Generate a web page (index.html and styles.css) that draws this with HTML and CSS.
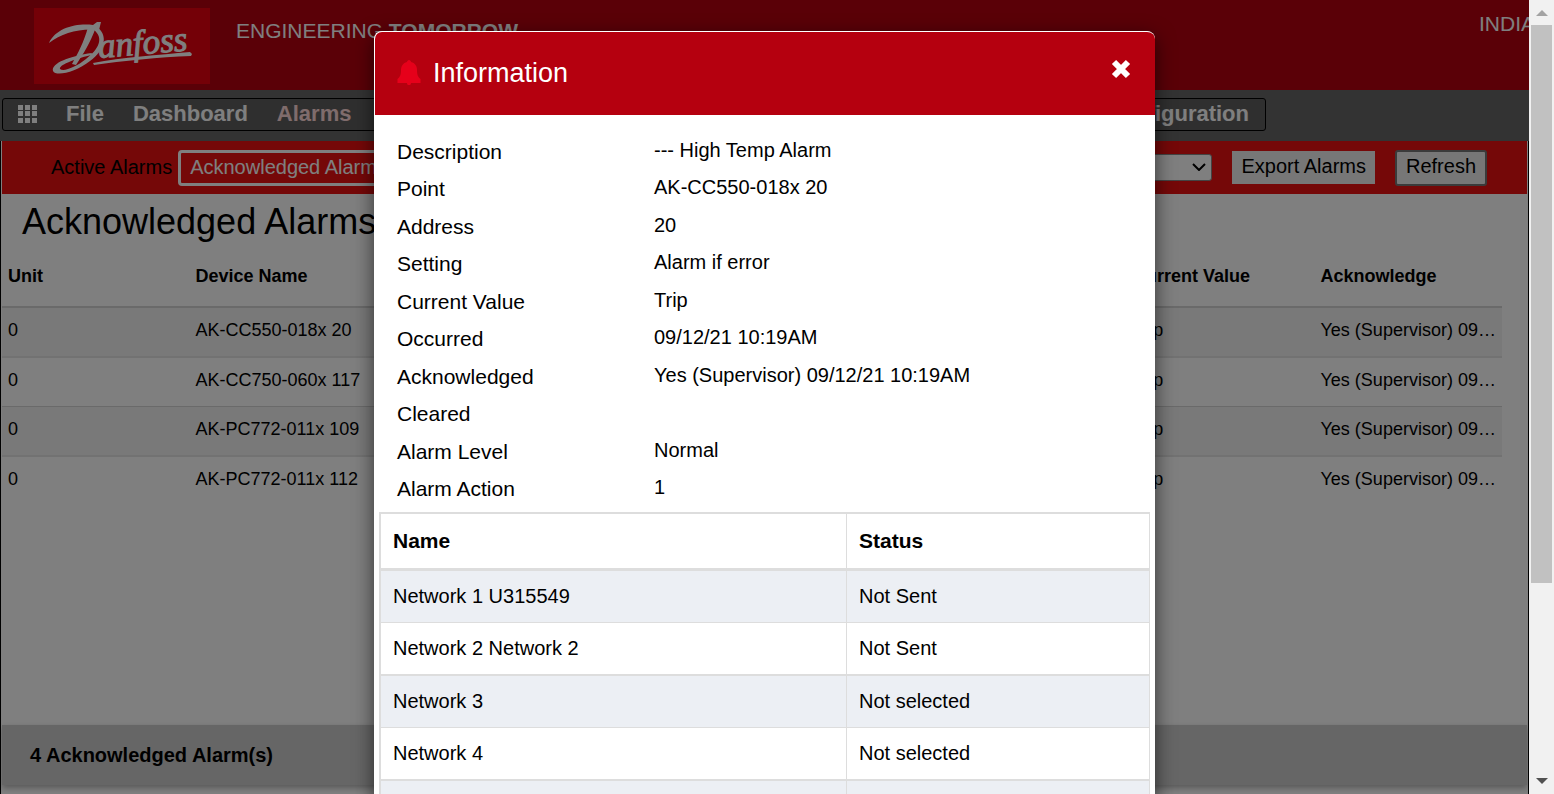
FILE: index.html
```html
<!DOCTYPE html>
<html lang="en">
<head>
<meta charset="utf-8">
<title>Acknowledged Alarms</title>
<link rel="stylesheet" href="styles.css">
</head>
<body>
<div class="window">
  <div class="screen">
    <div class="page">
      <header class="masthead">
        <svg class="logo" viewBox="0 0 176 76" role="img" aria-label="Danfoss">
          <rect width="176" height="76" fill="#e8000f"/>
          <g fill="#fff">
            <path d="M15 35C22 20 42 15 59 17L63 14L67 14L65 22C46 20 28 25 15 35Z"/>
            <path d="M62 19C56 36 49 46 42 57L38 56C44 45 50 34 54 19Z"/>
            <path d="M59 55C88 49 125 47 156 44L158 46L157 48C125 49 88 53 60 57Z"/>
            <path d="M62 18C75 27 71 42 56 53C42 64 22 69 19 63C17 55 36 48 58 45L57 47C38 52 25 57 26 61C30 64 42 59 52 51C65 41 70 30 60 22Z"/>
          </g>
          <text class="logo-text" x="65" y="50" transform="rotate(-5 65 50)">anfoss</text>
        </svg>
        <p class="slogan">ENGINEERING <strong>TOMORROW</strong></p>
        <p class="site">INDIA</p>
      </header>

      <nav class="menu-strip">
        <div class="menu">
          <a class="menu-grid" href="#" aria-label="Overview">
            <svg width="19" height="18" viewBox="0 0 19 18" fill="#fff">
              <path d="M0 0h5v5h-5zM7 0h5v5h-5zM14 0h5v5h-5zM0 6h5v5h-5zM7 6h5v5h-5zM14 6h5v5h-5zM0 13h5v5h-5zM7 13h5v5h-5zM14 13h5v5h-5z"/>
            </svg>
          </a>
          <a href="#">File</a>
          <a href="#">Dashboard</a>
          <a class="current" href="#">Alarms</a>
          <a class="menu-last" href="#">Configuration</a>
        </div>
      </nav>

      <main class="content">
        <div class="toolbar">
          <a class="tab" href="#">Active Alarms</a>
          <a class="tab tab-selected" href="#">Acknowledged Alarms</a>
          <div class="tools">
            <span class="picker">
              <select aria-label="Alarm filter"><option></option></select>
              <svg width="14" height="8" viewBox="0 0 14 8" fill="none" stroke="#000" stroke-width="2"><path d="M1 1L7 7L13 1"/></svg>
            </span>
            <button class="export" type="button">Export Alarms</button>
            <button class="refresh" type="button">Refresh</button>
          </div>
        </div>
        <h1 class="title">Acknowledged Alarms</h1>
        <table class="alarms">
          <thead>
            <tr><th>Unit</th><th>Device Name</th><th></th><th></th><th></th><th></th><th>Current Value</th><th>Acknowledge</th></tr>
          </thead>
          <tbody>
            <tr><td>0</td><td>AK-CC550-018x 20</td><td></td><td></td><td></td><td></td><td>Trip</td><td>Yes (Supervisor) 09/12/21 10:19AM</td></tr>
            <tr><td>0</td><td>AK-CC750-060x 117</td><td></td><td></td><td></td><td></td><td>Trip</td><td>Yes (Supervisor) 09/12/21 10:19AM</td></tr>
            <tr><td>0</td><td>AK-PC772-011x 109</td><td></td><td></td><td></td><td></td><td>Trip</td><td>Yes (Supervisor) 09/12/21 10:19AM</td></tr>
            <tr><td>0</td><td>AK-PC772-011x 112</td><td></td><td></td><td></td><td></td><td>Trip</td><td>Yes (Supervisor) 09/12/21 10:19AM</td></tr>
          </tbody>
        </table>
        <footer class="summary">4 Acknowledged Alarm(s)</footer>
      </main>
    </div>

    <div class="backdrop">
      <section class="modal" role="dialog" aria-modal="true" aria-labelledby="modal-title">
        <header class="modal-head">
          <svg class="bell" width="24" height="25" viewBox="0 0 24 25" fill="#e6001a">
            <path d="M12 0C13 0 14 1 14 2C18 3 20 6 20 10C20 15 21 17 23.500 19V23H14C14 26 10 26 10 23H0.500V19C3 17 4 15 4 10C4 6 6 3 10 2C10 1 11 0 12 0Z"/>
          </svg>
          <h2 id="modal-title">Information</h2>
          <button class="close" type="button" aria-label="Close">
            <svg width="20" height="20" viewBox="0 0 20 20" fill="none" stroke="#fff" stroke-width="6"><path d="M3 3L17 17M17 3L3 17"/></svg>
          </button>
        </header>
        <dl class="details">
          <dt>Description</dt><dd>--- High Temp Alarm</dd>
          <dt>Point</dt><dd>AK-CC550-018x 20</dd>
          <dt>Address</dt><dd>20</dd>
          <dt>Setting</dt><dd>Alarm if error</dd>
          <dt>Current Value</dt><dd>Trip</dd>
          <dt>Occurred</dt><dd>09/12/21 10:19AM</dd>
          <dt>Acknowledged</dt><dd>Yes (Supervisor) 09/12/21 10:19AM</dd>
          <dt>Cleared</dt><dd></dd>
          <dt>Alarm Level</dt><dd>Normal</dd>
          <dt>Alarm Action</dt><dd>1</dd>
        </dl>
        <table class="routes">
          <thead><tr><th>Name</th><th>Status</th></tr></thead>
          <tbody>
            <tr><td>Network 1 U315549</td><td>Not Sent</td></tr>
            <tr><td>Network 2 Network 2</td><td>Not Sent</td></tr>
            <tr><td>Network 3</td><td>Not selected</td></tr>
            <tr><td>Network 4</td><td>Not selected</td></tr>
            <tr><td></td><td></td></tr>
          </tbody>
        </table>
      </section>
    </div>
  </div>

  <div class="scrollbar" aria-hidden="true">
    <svg width="12" height="6" viewBox="0 0 12 6" fill="#a3a3a3"><path d="M0 6L6 0L12 6Z"/></svg>
    <div class="track"><div class="thumb"></div></div>
    <svg width="12" height="6" viewBox="0 0 12 6" fill="#505050"><path d="M0 0L6 6L12 0Z"/></svg>
  </div>
</div>
</body>
</html>
```

FILE: styles.css
```css
* {
  box-sizing: border-box;
}

body {
  margin: 0;
  font-family: "Liberation Sans", Arial, sans-serif;
  color: #000;
}

a {
  color: inherit;
  text-decoration: none;
}

button,
select {
  font: inherit;
  color: inherit;
}

.window {
  display: flex;
  height: 100vh;
  overflow: hidden;
}

.screen {
  position: relative;
  flex: 1;
  min-width: 0;
  overflow: hidden;
}

.page {
  display: flex;
  flex-direction: column;
  height: 100%;
  background: #fff;
}

/* Brand bar */
.masthead {
  display: flex;
  align-items: flex-start;
  flex: none;
  height: 90px;
  padding-left: 34px;
  background: #b5000f;
  color: #fff;
  font-size: 21px;
  line-height: 24px;
  white-space: nowrap;
}

.logo {
  flex: none;
  width: 176px;
  margin-top: 8px;
}

.logo-text {
  font-family: "Liberation Serif", serif;
  font-size: 35px;
  font-style: italic;
  fill: #fff;
  stroke: #fff;
  stroke-width: 1px;
}

.slogan {
  margin: 19px 0 0 26px;
}

.site {
  width: 50px;
  margin: 12px 0 0 auto;
}

/* Menu */
.menu-strip {
  flex: none;
  padding: 8px 263px 10px 2px;
  background: #666;
}

.menu {
  display: flex;
  align-items: center;
  gap: 29px;
  height: 33px;
  padding: 0 16px 2px 15px;
  border: 1px solid #000;
  border-radius: 3px;
  background: #5f5f5f;
  color: #fff;
  font-size: 22px;
  font-weight: bold;
}

.menu-grid {
  display: flex;
}

.current {
  color: #ffd8d8;
}

.menu-last {
  margin-left: auto;
}

/* Alarm list */
.content {
  display: flex;
  flex-direction: column;
  flex: 1;
  padding: 0 1px 9px;
  border: solid #000;
  border-width: 0 1px;
}

.toolbar {
  display: flex;
  align-items: center;
  height: 53px;
  padding: 0 40px 0 49px;
  background: #ea1010;
  font-size: 20px;
  white-space: nowrap;
}

.tab-selected {
  margin-left: 6px;
  padding: 3px 9px 4px;
  border: 3px solid #fff;
  border-radius: 4px;
  color: #fff;
}

.tools {
  display: flex;
  align-items: center;
  gap: 20px;
  margin-left: auto;
}

.picker {
  position: relative;
  display: flex;
}

.picker select {
  appearance: none;
  width: 200px;
  height: 27px;
  border: 1px solid #888;
  border-radius: 3px;
  background: #fff;
}

.picker svg {
  position: absolute;
  top: 9px;
  right: 6px;
}

.export,
.refresh {
  height: 33px;
  padding: 0 9px 2px;
  border: 0;
  background: #efefef;
}

.refresh {
  height: 36px;
  border: 2px solid #767676;
  border-radius: 3px;
}

.title {
  margin: 0;
  padding: 7px 20px 0;
  font-size: 36px;
  font-weight: normal;
  line-height: 42px;
}

.alarms {
  width: calc(100% - 25px);
  table-layout: fixed;
  border-spacing: 0;
  font-size: 18px;
  line-height: 22px;
  text-align: left;
}

.alarms th,
.alarms td {
  overflow: hidden;
  padding: 11px 6px 15px;
  text-overflow: ellipsis;
  white-space: nowrap;
}

.alarms th {
  padding: 22px 6px 19px;
  border-bottom: 2px solid #d4d4d4;
}

.alarms td {
  border-bottom: 1px solid #d4d4d4;
}

.alarms tbody tr:nth-child(odd) td {
  border-bottom: 2px solid #e4e4e4;
}

.alarms tbody tr:last-child td {
  border-bottom: 0;
}

.alarms tbody tr:nth-child(odd) {
  background: #f2f2f2;
}

.summary {
  margin-top: auto;
  padding: 18px 28px;
  background: #ccc;
  box-shadow: 0 3px 6px rgba(0, 0, 0, 0.3);
  font-size: 20px;
  font-weight: bold;
  line-height: 24px;
}

/* Information dialog */
.backdrop {
  position: absolute;
  inset: 0;
  padding-top: 31px;
  background: rgba(0, 0, 0, 0.5);
}

.modal {
  width: 781px;
  max-width: 100%;
  margin: 0 auto;
  overflow: hidden;
  border: 1px solid #fff;
  border-right: 0;
  border-radius: 8px;
  background: #fff;
  box-shadow: 0 6px 20px rgba(0, 0, 0, 0.6);
}

.modal-head {
  display: flex;
  align-items: center;
  gap: 12px;
  height: 83px;
  padding: 0 24px 2px 22px;
  background: #b5000f;
  color: #fff;
}

.modal-head h2 {
  margin: 0;
  font-size: 27px;
  font-weight: normal;
  line-height: 32px;
}

.close {
  display: flex;
  margin-left: auto;
  padding: 0 0 8px;
  border: 0;
  background: none;
}

.details {
  display: grid;
  grid-template-columns: 257px 1fr;
  grid-template-rows: repeat(10, 1fr);
  align-items: center;
  min-height: 375px;
  margin: 18px 22px 4px;
  font-size: 20px;
  line-height: 24px;
}

.details dt {
  font-size: 21px;
}

.details dd {
  margin: 0;
  padding-bottom: 4px;
}

.routes {
  width: calc(100% - 9px);
  margin: 0 5px 0 4px;
  border: 2px solid #ddd;
  border-width: 2px 1px 0 2px;
  border-spacing: 0;
  font-size: 20px;
  line-height: 24px;
  text-align: left;
}

.routes th,
.routes td {
  height: 52px;
  padding: 0 12px 2px;
  border-bottom: 1px solid #ddd;
}

.routes th:first-child,
.routes td:first-child {
  width: 466px;
  border-right: 1px solid #ddd;
}

.routes th {
  height: 57px;
  padding-bottom: 0;
  border-bottom-width: 3px;
  font-size: 21px;
}

.routes tbody tr:nth-child(odd) {
  background: #eceff4;
}

.routes tbody tr:nth-child(even) td {
  height: 53px;
  border-bottom-width: 2px;
}

/* Window scrollbar */
.scrollbar {
  display: flex;
  flex: none;
  flex-direction: column;
  align-items: center;
  gap: 9px;
  width: 25px;
  padding: 10px 1px 10px 2px;
  background: #f1f1f1;
}

.track {
  flex: 1;
  align-self: stretch;
}

.thumb {
  height: 75%;
  margin-right: 1px;
  background: #c1c1c1;
}
```
